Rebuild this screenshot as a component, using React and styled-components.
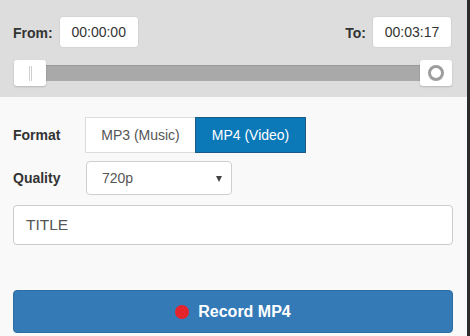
import { createGlobalStyle, styled } from 'styled-components';

const GlobalStyle = createGlobalStyle`
  html, body {
    margin: 0;
    padding: 0;
    background: #2b2b2b;
  }
  body {
    font-family: "Liberation Sans", Arial, sans-serif;
    font-size: 14px;
    color: #333;
  }
`;

const App = () => {
  return (
    <>
      <GlobalStyle />
      <Page>
        <Panel>
          <RangeArea>
            <TimeRow>
              <TimeGroup>
                <TimeLabel>From:</TimeLabel>
                <TimeBox>00:00:00</TimeBox>
              </TimeGroup>
              <TimeGroup>
                <TimeLabel>To:</TimeLabel>
                <TimeBox>00:03:17</TimeBox>
              </TimeGroup>
            </TimeRow>
            <Slider>
              <Track />
              <Handle $side="left">
                <Grip />
                <Grip />
              </Handle>
              <Handle $side="right">
                <Ring />
              </Handle>
            </Slider>
          </RangeArea>
          <Form>
            <FieldRow>
              <FieldLabel>Format</FieldLabel>
              <ToggleGroup>
                <Toggle>MP3 (Music)</Toggle>
                <Toggle $active>MP4 (Video)</Toggle>
              </ToggleGroup>
            </FieldRow>
            <FieldRow $tight>
              <FieldLabel>Quality</FieldLabel>
              <Select>
                <span>720p</span>
                <Caret />
              </Select>
            </FieldRow>
            <TitleInput>TITLE</TitleInput>
            <RecordButton>
              <Dot />
              Record MP4
            </RecordButton>
          </Form>
        </Panel>
        <Edge />
      </Page>
    </>
  );
};

const Page = styled.div`
  width: 470px;
  height: 336px;
  display: flex;
  overflow: hidden;
`;
const Panel = styled.div`
  width: 467px;
  background: #f9f9f9;
  display: flex;
  flex-direction: column;
`;
const Edge = styled.div`
  width: 3px;
  background: #2b2b2b;
`;
const RangeArea = styled.div`
  background: #dddddd;
  padding: 16px 15px 11px 13px;
`;
const TimeRow = styled.div`
  display: flex;
  justify-content: space-between;
  height: 32px;
`;
const TimeGroup = styled.div`
  display: flex;
  align-items: center;
  gap: 6px;
`;
const TimeLabel = styled.div`
  font-weight: 700;
  font-size: 14px;
  color: #333;
  padding-top: 1px;
`;
const TimeBox = styled.div`
  width: 80px;
  height: 32px;
  box-sizing: border-box;
  background: #fff;
  border: 1px solid #d4d4d4;
  border-radius: 4px;
  display: flex;
  align-items: center;
  justify-content: center;
  font-size: 14px;
  color: #333;
`;
const Slider = styled.div`
  position: relative;
  margin-top: 12px;
  height: 26px;
  margin-left: 1px;
`;
const Track = styled.div`
  position: absolute;
  left: 16px;
  right: 16px;
  top: 5px;
  height: 15px;
  background: #a9a9a9;
  border-top: 1px solid #999;
`;
const Handle = styled.div`
  position: absolute;
  top: 0;
  ${(p) => (p.$side === 'left' ? 'left: 0;' : 'right: 0;')}
  width: 32px;
  height: 26px;
  background: #fff;
  border-radius: 3px;
  box-shadow: 0 1px 2px rgba(0, 0, 0, 0.18);
  display: flex;
  align-items: center;
  justify-content: center;
  gap: 1px;
`;
const Grip = styled.div`
  width: 1px;
  height: 15px;
  background: #cfcfcf;
`;
const Ring = styled.div`
  width: 10px;
  height: 10px;
  border: 3px solid #9d9d9d;
  border-radius: 50%;
`;
const Form = styled.div`
  padding: 20px 14px 0 13px;
  display: flex;
  flex-direction: column;
`;
const FieldRow = styled.div`
  display: flex;
  align-items: center;
  margin-bottom: ${(p) => (p.$tight ? '10px' : '8px')};
`;
const FieldLabel = styled.div`
  width: 72px;
  font-weight: 700;
  font-size: 14px;
  color: #333;
`;
const ToggleGroup = styled.div`
  display: flex;
`;
const Toggle = styled.div`
  width: 111px;
  height: 36px;
  box-sizing: border-box;
  display: flex;
  align-items: center;
  justify-content: center;
  font-size: 14px;
  background: ${(p) => (p.$active ? '#0b78b8' : '#fff')};
  color: ${(p) => (p.$active ? '#fff' : '#555')};
  border: 1px solid ${(p) => (p.$active ? '#1d5a86' : '#dcdcdc')};
  ${(p) => (p.$active ? 'margin-left: -1px;' : '')}
`;
const Select = styled.div`
  width: 146px;
  height: 34px;
  margin-left: 1px;
  box-sizing: border-box;
  background: #fff;
  border: 1px solid #cfcfcf;
  border-radius: 4px;
  display: flex;
  align-items: center;
  justify-content: space-between;
  padding: 0 9px 0 15px;
  font-size: 14px;
  color: #555;
`;
const Caret = styled.div`
  width: 0;
  height: 0;
  border-left: 3px solid transparent;
  border-right: 3px solid transparent;
  border-top: 6px solid #444;
  margin-top: 1px;
`;
const TitleInput = styled.div`
  height: 40px;
  box-sizing: border-box;
  background: #fff;
  border: 1px solid #cccccc;
  border-radius: 4px;
  display: flex;
  align-items: center;
  padding-left: 12px;
  font-size: 15.5px;
  color: #555;
`;
const RecordButton = styled.div`
  margin-top: 45px;
  height: 43px;
  box-sizing: border-box;
  background: #337ab7;
  border: 1px solid #2e6da4;
  border-radius: 4px;
  display: flex;
  align-items: center;
  justify-content: center;
  gap: 9px;
  color: #fff;
  font-weight: 700;
  font-size: 16px;
`;
const Dot = styled.span`
  width: 14px;
  height: 14px;
  border-radius: 50%;
  background: #e5232b;
`;

export default App;
